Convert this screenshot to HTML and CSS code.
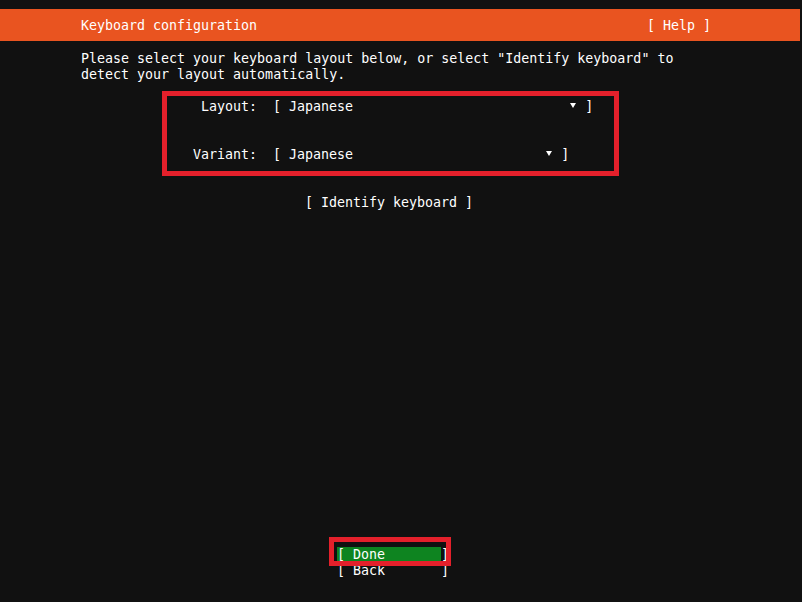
FILE: index.html
```html
<!DOCTYPE html>
<html>
<head>
<meta charset="utf-8">
<link rel="stylesheet" href="styles.css">
</head>
<body>
<div class="screen">
  <div class="header">
    <span class="title">Keyboard configuration</span>
    <span class="help">[ Help ]</span>
  </div>
  <p class="intro">Please select your keyboard layout below, or select "Identify keyboard" to<br>detect your layout automatically.</p>
  <div class="form-box">
    <div class="row"> Layout:  [ Japanese                           <svg class="arrow" width="8" height="16" viewBox="0 0 8 16"><polygon points="1,4 7,4 4,9" fill="#fff"/></svg> ]</div>
    <div class="row gap">Variant:  [ Japanese                        <svg class="arrow" width="8" height="16" viewBox="0 0 8 16"><polygon points="1,4 7,4 4,9" fill="#fff"/></svg> ]</div>
  </div>
  <div class="identify">[ Identify keyboard ]</div>
  <div class="buttons">
    <div class="btn"><span class="focus">[ Done       </span>]</div>
    <div class="btn">[ Back       ]</div>
    <div class="mark"></div>
  </div>
</div>
</body>
</html>
```
FILE: styles.css
```css
html, body {
  margin: 0;
  padding: 0;
  background: #111111;
}
body {
  width: 802px;
  height: 602px;
  overflow: hidden;
}
.screen {
  height: 602px;
  box-sizing: border-box;
  padding-top: 9px;
  display: flex;
  flex-direction: column;
  font-family: "DejaVu Sans Mono", monospace;
  font-size: 13.3px;
  line-height: 16px;
  color: #ffffff;
}
.header {
  width: 800px;
  height: 32px;
  background: #e95420;
  display: flex;
  align-items: center;
  justify-content: space-between;
  box-sizing: border-box;
  padding: 2px 89px 0 81px;
}
.title, .help, .intro, .row, .identify, .btn {
  white-space: pre;
}
.intro {
  margin: 10px 0 0 0;
  padding-left: 81px;
}
.form-box {
  margin: 8px 0 0 162px;
  width: 457px;
  box-sizing: border-box;
  border: 5px solid #e4202b;
  padding: 3px 0 8px 26px;
}
.row {
  height: 16px;
}
.row.gap {
  margin-top: 32px;
}
.arrow {
  vertical-align: top;
}
.identify {
  margin-top: 19px;
  padding-left: 305px;
}
.buttons {
  margin-top: auto;
  padding-bottom: 23px;
  position: relative;
}
.btn {
  padding-left: 337px;
  height: 16px;
}
.focus {
  background: #0e8420;
}
.mark {
  position: absolute;
  left: 329px;
  top: -10px;
  width: 122px;
  height: 29px;
  box-sizing: border-box;
  border: 5px solid #e4202b;
}
```
